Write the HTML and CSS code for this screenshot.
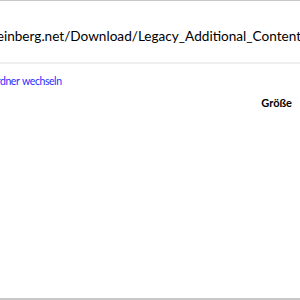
FILE: index.html
```html
<!DOCTYPE html>
<html lang="de">
<head>
    <meta charset="UTF-8">
    <title>Download</title>
    <link rel="stylesheet" href="styles.css">
</head>
<body>
    <div class="window">
        <div class="path-bar">
            <span class="path">steinberg.net/Download/Legacy_Additional_Content/</span>
        </div>
        <div class="divider"></div>
        <div class="links">
            <a href="#" class="folder-link">Ordner wechseln</a>
        </div>
        <div class="columns">
            <span class="col-size">Größe</span>
        </div>
    </div>
</body>
</html>
```

FILE: styles.css
```css
html, body {
    margin: 0;
    padding: 0;
    background: #fff;
}

body {
    font-family: Lato, "Noto Sans", sans-serif;
    color: #000;
}

.window {
    width: 300px;
    height: 300px;
    box-sizing: border-box;
    border-top: 1px solid #c8c8c8;
    border-bottom: 2px solid #c8c8c8;
    overflow: hidden;
}

.path-bar {
    height: 61px;
    display: flex;
    align-items: center;
    white-space: nowrap;
    overflow: hidden;
}

.path {
    font-size: 13.6px;
    margin-left: -14px;
    padding-top: 8px;
}

.divider {
    height: 2px;
    background: #f0f0f0;
}

.links {
    padding-top: 5px;
    white-space: nowrap;
}

.folder-link {
    font-size: 10.5px;
    letter-spacing: -0.45px;
    word-spacing: 1px;
    color: #2b2bff;
    text-decoration: none;
    margin-left: -11px;
}

.columns {
    display: flex;
    justify-content: flex-end;
    padding: 8px 8px 0 0;
}

.col-size {
    font-size: 11px;
    font-weight: bold;
}
```
